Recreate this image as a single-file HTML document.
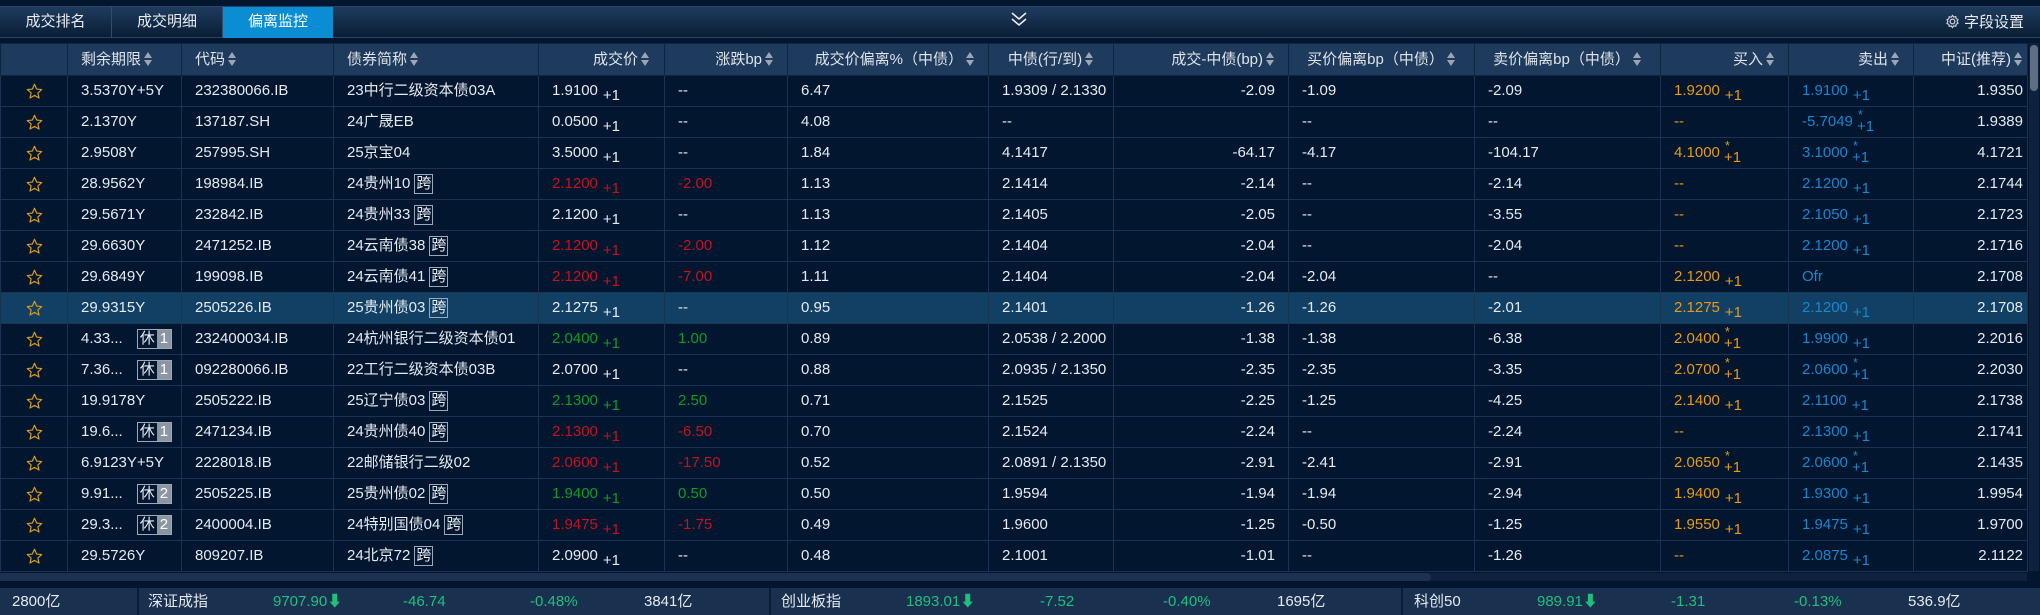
<!DOCTYPE html>
<html><head><meta charset="utf-8"><style>
*{margin:0;padding:0;box-sizing:border-box}
body{width:2040px;height:615px;overflow:hidden;background:#021630;font-family:"Liberation Sans","Noto Sans CJK SC",sans-serif;color:#e6eaf0;font-size:15px;position:relative}
.tabbar{position:absolute;left:0;top:6px;width:2040px;height:32px;background:linear-gradient(#1f3c5e,#0a1d35);border-top:1px solid #2a4566;border-bottom:1px solid #2a4566}
.tab{position:absolute;top:0;height:31px;line-height:30px;text-align:center;color:#e8ecf2;font-size:15px;border-right:1px solid #324c6b}
.tab.on{background:#0a8dd2;color:#fff;border:none}
.chev{position:absolute;left:1010px;top:4px}
.fset{position:absolute;right:16px;top:0;line-height:31px;font-size:15px;color:#e8ecf2}
table{position:absolute;left:0;top:43px;border-collapse:collapse;table-layout:fixed;width:2027px}
td,th{height:31px;border:1px solid #1b3352;white-space:nowrap;overflow:hidden;padding:0 13px;font-weight:normal;line-height:20px}
th{background:#1e3a5c;color:#dfe4ea;height:32px;border-color:#0f2643}
tr.sel td{background:#124064}
.r{text-align:right}.c{text-align:center}
.s{display:inline-block;vertical-align:middle;margin-left:3px;width:9px;height:14px;position:relative;top:-1px}
.s:before,.s:after{content:"";position:absolute;left:0;border-left:4.5px solid transparent;border-right:4.5px solid transparent}
.s:before{top:0;border-bottom:6px solid #9aa6b4}.s:after{bottom:0;border-top:6px solid #9aa6b4}
sub{font-size:15px;vertical-align:-5px;margin-left:5px;line-height:10px}
.red{color:#c8121c}.grn{color:#109a26}.org{color:#e89a10}.blu{color:#1a86cc}
.bx{display:inline-block;border:1px solid #9aa8b8;line-height:18px;padding:0 1px;margin-left:4px;font-size:15px}
.xiu{display:inline-block;border:1px solid #9aa8b8;line-height:18px;margin-left:14px;padding-left:2px}
.xiu b{display:inline-block;background:#8c96a3;color:#fff;padding:0 3px;margin-left:2px;font-weight:normal}
.star{text-align:center;padding:0}
.star svg{vertical-align:middle}
.st{font-size:13px;position:relative;top:-7px;margin-left:5px}
.st+sub{margin-left:-6px}
.hs{position:absolute;left:0;top:573px;width:2027px;height:8px;background:#0e2240}
.hs i{position:absolute;left:0;top:0;width:1431px;height:8px;background:#1d3150;border-radius:0 4px 4px 0}
.vs{position:absolute;left:2029px;top:43px;width:10px;height:528px;background:#0e2240}
.vs i{position:absolute;left:1px;top:2px;width:8px;height:46px;background:#5f6e80;border-radius:4px}
.foot{position:absolute;left:0;top:588px;width:2040px;height:27px;background:#19304f;font-size:15px;line-height:27px}
.foot span{position:absolute}
.g{color:#1fc07c}
.dv{position:absolute;top:0;width:2px;height:27px;background:#0b1d35}
</style></head><body>
<svg width="0" height="0" style="position:absolute"><defs><symbol id="st" viewBox="0 0 20 20"><path d="M10 1.5l2.5 5.6 6 .6-4.5 4 1.3 6-5.3-3.1-5.3 3.1 1.3-6-4.5-4 6-.6z" fill="none" stroke="#d89b1c" stroke-width="1.4" stroke-linejoin="round"/></symbol></defs></svg>
<div class="tabbar">
<div class="tab" style="left:0;width:112px">成交排名</div>
<div class="tab" style="left:112px;width:111px">成交明细</div>
<div class="tab on" style="left:223px;width:110px">偏离监控</div>
<svg class="chev" width="18" height="16" viewBox="0 0 18 16"><path d="M2 2l7 6 7-6M2 8l7 6 7-6" stroke="#e8ecf2" stroke-width="1.6" fill="none"/></svg>
<div class="fset"><svg width="15" height="15" viewBox="0 0 16 16" style="vertical-align:-2px;margin-right:4px"><circle cx="8" cy="8" r="2.5" stroke="#d0d6de" fill="none" stroke-width="1.3"/><path d="M8 1.5l1.3 1.8 2.2-.6.4 2.2 2 1-1 2 1 2-2 1-.4 2.2-2.2-.6L8 14.5l-1.3-1.8-2.2.6-.4-2.2-2-1 1-2-1-2 2-1 .4-2.2 2.2.6z" stroke="#d0d6de" fill="none" stroke-width="1.2"/></svg>字段设置</div>
</div>
<table>
<colgroup><col style="width:67px"><col style="width:114px"><col style="width:152px"><col style="width:205px"><col style="width:126px"><col style="width:123px"><col style="width:201px"><col style="width:125px"><col style="width:175px"><col style="width:186px"><col style="width:186px"><col style="width:128px"><col style="width:125px"><col style="width:114px"></colgroup>
<tr><th></th><th style="text-align:left">剩余期限<i class="s"></i></th><th style="text-align:left">代码<i class="s"></i></th><th style="text-align:left">债券简称<i class="s"></i></th><th class="r" style="padding-right:14px">成交价<i class="s"></i></th><th class="r">涨跌bp<i class="s"></i></th><th class="r">成交价偏离%（中债）<i class="s"></i></th><th class="c">中债(行/到)<i class="s"></i></th><th class="r">成交-中债(bp)<i class="s"></i></th><th class="c">买价偏离bp（中债）<i class="s"></i></th><th class="c">卖价偏离bp（中债）<i class="s"></i></th><th class="r">买入<i class="s"></i></th><th class="r">卖出<i class="s"></i></th><th class="r" style="padding-right:4px">中证(推荐)<i class="s"></i></th></tr>
<tr><td class="star"><svg width="17" height="17"><use href="#st"/></svg></td><td>3.5370Y+5Y</td><td>232380066.IB</td><td>23中行二级资本债03A</td><td>1.9100<sub>+1</sub></td><td>--</td><td>6.47</td><td>1.9309 / 2.1330</td><td class="r">-2.09</td><td>-1.09</td><td>-2.09</td><td class="org">1.9200<sub>+1</sub></td><td class="blu">1.9100<sub>+1</sub></td><td class="r" style="padding-right:4px">1.9350</td></tr>
<tr><td class="star"><svg width="17" height="17"><use href="#st"/></svg></td><td>2.1370Y</td><td>137187.SH</td><td>24广晟EB</td><td>0.0500<sub>+1</sub></td><td>--</td><td>4.08</td><td>--</td><td class="r"></td><td>--</td><td>--</td><td class="org">--</td><td class="blu">-5.7049<span class="st">*</span><sub>+1</sub></td><td class="r" style="padding-right:4px">1.9389</td></tr>
<tr><td class="star"><svg width="17" height="17"><use href="#st"/></svg></td><td>2.9508Y</td><td>257995.SH</td><td>25京宝04</td><td>3.5000<sub>+1</sub></td><td>--</td><td>1.84</td><td>4.1417</td><td class="r">-64.17</td><td>-4.17</td><td>-104.17</td><td class="org">4.1000<span class="st">*</span><sub>+1</sub></td><td class="blu">3.1000<span class="st">*</span><sub>+1</sub></td><td class="r" style="padding-right:4px">4.1721</td></tr>
<tr><td class="star"><svg width="17" height="17"><use href="#st"/></svg></td><td>28.9562Y</td><td>198984.IB</td><td>24贵州10<span class="bx">跨</span></td><td class="red">2.1200<sub>+1</sub></td><td class="red">-2.00</td><td>1.13</td><td>2.1414</td><td class="r">-2.14</td><td>--</td><td>-2.14</td><td class="org">--</td><td class="blu">2.1200<sub>+1</sub></td><td class="r" style="padding-right:4px">2.1744</td></tr>
<tr><td class="star"><svg width="17" height="17"><use href="#st"/></svg></td><td>29.5671Y</td><td>232842.IB</td><td>24贵州33<span class="bx">跨</span></td><td>2.1200<sub>+1</sub></td><td>--</td><td>1.13</td><td>2.1405</td><td class="r">-2.05</td><td>--</td><td>-3.55</td><td class="org">--</td><td class="blu">2.1050<sub>+1</sub></td><td class="r" style="padding-right:4px">2.1723</td></tr>
<tr><td class="star"><svg width="17" height="17"><use href="#st"/></svg></td><td>29.6630Y</td><td>2471252.IB</td><td>24云南债38<span class="bx">跨</span></td><td class="red">2.1200<sub>+1</sub></td><td class="red">-2.00</td><td>1.12</td><td>2.1404</td><td class="r">-2.04</td><td>--</td><td>-2.04</td><td class="org">--</td><td class="blu">2.1200<sub>+1</sub></td><td class="r" style="padding-right:4px">2.1716</td></tr>
<tr><td class="star"><svg width="17" height="17"><use href="#st"/></svg></td><td>29.6849Y</td><td>199098.IB</td><td>24云南债41<span class="bx">跨</span></td><td class="red">2.1200<sub>+1</sub></td><td class="red">-7.00</td><td>1.11</td><td>2.1404</td><td class="r">-2.04</td><td>-2.04</td><td>--</td><td class="org">2.1200<sub>+1</sub></td><td class="blu">Ofr</td><td class="r" style="padding-right:4px">2.1708</td></tr>
<tr class="sel"><td class="star"><svg width="17" height="17"><use href="#st"/></svg></td><td>29.9315Y</td><td>2505226.IB</td><td>25贵州债03<span class="bx">跨</span></td><td>2.1275<sub>+1</sub></td><td>--</td><td>0.95</td><td>2.1401</td><td class="r">-1.26</td><td>-1.26</td><td>-2.01</td><td class="org">2.1275<sub>+1</sub></td><td class="blu">2.1200<sub>+1</sub></td><td class="r" style="padding-right:4px">2.1708</td></tr>
<tr><td class="star"><svg width="17" height="17"><use href="#st"/></svg></td><td>4.33...<span class="xiu">休<b>1</b></span></td><td>232400034.IB</td><td>24杭州银行二级资本债01</td><td class="grn">2.0400<sub>+1</sub></td><td class="grn">1.00</td><td>0.89</td><td>2.0538 / 2.2000</td><td class="r">-1.38</td><td>-1.38</td><td>-6.38</td><td class="org">2.0400<span class="st">*</span><sub>+1</sub></td><td class="blu">1.9900<sub>+1</sub></td><td class="r" style="padding-right:4px">2.2016</td></tr>
<tr><td class="star"><svg width="17" height="17"><use href="#st"/></svg></td><td>7.36...<span class="xiu">休<b>1</b></span></td><td>092280066.IB</td><td>22工行二级资本债03B</td><td>2.0700<sub>+1</sub></td><td>--</td><td>0.88</td><td>2.0935 / 2.1350</td><td class="r">-2.35</td><td>-2.35</td><td>-3.35</td><td class="org">2.0700<span class="st">*</span><sub>+1</sub></td><td class="blu">2.0600<span class="st">*</span><sub>+1</sub></td><td class="r" style="padding-right:4px">2.2030</td></tr>
<tr><td class="star"><svg width="17" height="17"><use href="#st"/></svg></td><td>19.9178Y</td><td>2505222.IB</td><td>25辽宁债03<span class="bx">跨</span></td><td class="grn">2.1300<sub>+1</sub></td><td class="grn">2.50</td><td>0.71</td><td>2.1525</td><td class="r">-2.25</td><td>-1.25</td><td>-4.25</td><td class="org">2.1400<sub>+1</sub></td><td class="blu">2.1100<sub>+1</sub></td><td class="r" style="padding-right:4px">2.1738</td></tr>
<tr><td class="star"><svg width="17" height="17"><use href="#st"/></svg></td><td>19.6...<span class="xiu">休<b>1</b></span></td><td>2471234.IB</td><td>24贵州债40<span class="bx">跨</span></td><td class="red">2.1300<sub>+1</sub></td><td class="red">-6.50</td><td>0.70</td><td>2.1524</td><td class="r">-2.24</td><td>--</td><td>-2.24</td><td class="org">--</td><td class="blu">2.1300<sub>+1</sub></td><td class="r" style="padding-right:4px">2.1741</td></tr>
<tr><td class="star"><svg width="17" height="17"><use href="#st"/></svg></td><td>6.9123Y+5Y</td><td>2228018.IB</td><td>22邮储银行二级02</td><td class="red">2.0600<sub>+1</sub></td><td class="red">-17.50</td><td>0.52</td><td>2.0891 / 2.1350</td><td class="r">-2.91</td><td>-2.41</td><td>-2.91</td><td class="org">2.0650<span class="st">*</span><sub>+1</sub></td><td class="blu">2.0600<span class="st">*</span><sub>+1</sub></td><td class="r" style="padding-right:4px">2.1435</td></tr>
<tr><td class="star"><svg width="17" height="17"><use href="#st"/></svg></td><td>9.91...<span class="xiu">休<b>2</b></span></td><td>2505225.IB</td><td>25贵州债02<span class="bx">跨</span></td><td class="grn">1.9400<sub>+1</sub></td><td class="grn">0.50</td><td>0.50</td><td>1.9594</td><td class="r">-1.94</td><td>-1.94</td><td>-2.94</td><td class="org">1.9400<sub>+1</sub></td><td class="blu">1.9300<sub>+1</sub></td><td class="r" style="padding-right:4px">1.9954</td></tr>
<tr><td class="star"><svg width="17" height="17"><use href="#st"/></svg></td><td>29.3...<span class="xiu">休<b>2</b></span></td><td>2400004.IB</td><td>24特别国债04<span class="bx">跨</span></td><td class="red">1.9475<sub>+1</sub></td><td class="red">-1.75</td><td>0.49</td><td>1.9600</td><td class="r">-1.25</td><td>-0.50</td><td>-1.25</td><td class="org">1.9550<sub>+1</sub></td><td class="blu">1.9475<sub>+1</sub></td><td class="r" style="padding-right:4px">1.9700</td></tr>
<tr><td class="star"><svg width="17" height="17"><use href="#st"/></svg></td><td>29.5726Y</td><td>809207.IB</td><td>24北京72<span class="bx">跨</span></td><td>2.0900<sub>+1</sub></td><td>--</td><td>0.48</td><td>2.1001</td><td class="r">-1.01</td><td>--</td><td>-1.26</td><td class="org">--</td><td class="blu">2.0875<sub>+1</sub></td><td class="r" style="padding-right:4px">2.1122</td></tr>
</table>
<div class="vs"><i></i></div>
<div class="hs"><i></i></div>
<div class="foot">
<span style="left:12px">2800亿</span><div class="dv" style="left:137px"></div>
<span style="left:148px">深证成指</span><span class="g" style="left:273px">9707.90⬇</span><span class="g" style="left:403px">-46.74</span><span class="g" style="left:530px">-0.48%</span><span style="left:644px">3841亿</span><div class="dv" style="left:769px"></div>
<span style="left:781px">创业板指</span><span class="g" style="left:906px">1893.01⬇</span><span class="g" style="left:1040px">-7.52</span><span class="g" style="left:1163px">-0.40%</span><span style="left:1277px">1695亿</span><div class="dv" style="left:1401px"></div>
<span style="left:1414px">科创50</span><span class="g" style="left:1537px">989.91⬇</span><span class="g" style="left:1671px">-1.31</span><span class="g" style="left:1794px">-0.13%</span><span style="left:1908px">536.9亿</span>
</div>
</body></html>
